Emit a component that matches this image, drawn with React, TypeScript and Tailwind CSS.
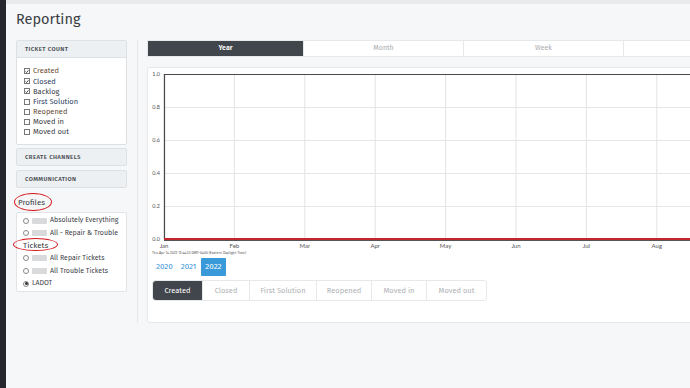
const tickets = [
  { label: "Created", checked: true, color: "text-[#6f4d33]" },
  { label: "Closed", checked: true, color: "text-[#30425f]" },
  { label: "Backlog", checked: true, color: "text-[#3b4047]" },
  { label: "First Solution", checked: false, color: "text-[#2a4163]" },
  { label: "Reopened", checked: false, color: "text-[#634a36]" },
  { label: "Moved in", checked: false, color: "text-[#3b4047]" },
  { label: "Moved out", checked: false, color: "text-[#3b4047]" },
];

const months = ["Jan", "Feb", "Mar", "Apr", "May", "Jun", "Jul", "Aug"];
const yLabels = ["1.0", "0.8", "0.6", "0.4", "0.2", "0.0"];
const periods = [
  { label: "Year", w: "w-[155px]" },
  { label: "Month", w: "w-[160px]" },
  { label: "Week", w: "w-[160px]" },
  { label: "", w: "w-[160px]" },
];
const series = [
  { label: "Created", w: "w-[49px]" },
  { label: "Closed", w: "w-[47px]" },
  { label: "First Solution", w: "w-[67px]" },
  { label: "Reopened", w: "w-[55px]" },
  { label: "Moved in", w: "w-[55px]" },
  { label: "Moved out", w: "w-[60px]" },
];

function Checkbox({ checked }: { checked: boolean }) {
  return (
    <span className="flex h-[6px] w-[6px] shrink-0 items-center justify-center border border-[#777] bg-white">
      {checked && (
        <svg viewBox="0 0 6 6" className="h-[5px] w-[5px]">
          <path d="M0.8 3 L2.4 4.6 L5.2 1.2" fill="none" stroke="#222" strokeWidth="1.2" />
        </svg>
      )}
    </span>
  );
}

function Radio({ checked = false }: { checked?: boolean }) {
  return (
    <span className="flex h-[6px] w-[6px] shrink-0 items-center justify-center rounded-full border border-[#888] bg-white">
      {checked && <span className="h-[3px] w-[3px] rounded-full bg-[#333]" />}
    </span>
  );
}

function Blur({ w }: { w: string }) {
  return <span className={`h-[6px] ${w} shrink-0 rounded-[1px] bg-[#d9dadc] blur-[0.6px]`} />;
}

function Chart() {
  const x0 = 16;
  const step = 70.4;
  const top = 6;
  const bottom = 171;
  const rows = 5;
  return (
    <svg width="560" height="182" className="block" style={{ fontFamily: "Lato, sans-serif" }}>
      {months.map((m, i) => (
        <line key={m} x1={x0 + i * step} y1={top} x2={x0 + i * step} y2={bottom} stroke="#e3e3e3" strokeWidth="1" />
      ))}
      {yLabels.map((l, i) => {
        const y = top + (i * (bottom - top)) / rows;
        return (
          <g key={l}>
            <line x1={x0} y1={y + 0.5} x2={560} y2={y + 0.5} stroke="#e6e6e6" strokeWidth="1" />
            <text x={12} y={y + 2} textAnchor="end" fontSize="5.5" fill="#555">
              {l}
            </text>
          </g>
        );
      })}
      <line x1={x0} y1={top + 0.5} x2={560} y2={top + 0.5} stroke="#4a4a4a" strokeWidth="1.2" />
      <line x1={x0 + 0.5} y1={top} x2={x0 + 0.5} y2={bottom} stroke="#4a4a4a" strokeWidth="1.2" />
      <line x1={x0} y1={bottom + 1.5} x2={560} y2={bottom + 1.5} stroke="#555" strokeWidth="1" />
      <line x1={x0} y1={bottom} x2={560} y2={bottom} stroke="#c4262e" strokeWidth="2" />
      {months.map((m, i) => (
        <text key={m} x={x0 + i * step} y={180} textAnchor="middle" fontSize="6" fill="#555">
          {m}
        </text>
      ))}
    </svg>
  );
}

export default function App() {
  return (
    <div
      className="flex h-[388px] w-[690px] overflow-hidden bg-[#f6f7f8] text-[#3d4147]"
      style={{ fontFamily: "'Fira Sans', Lato, 'Liberation Sans', sans-serif" }}
    >
      <div className="w-[6px] shrink-0 bg-[#25272c]" />
      <div className="flex min-w-0 flex-1 flex-col overflow-hidden">
        <div className="h-[4px] shrink-0 bg-[#e9eaeb]" />
        <h1 className="pl-[10px] pt-[6px] text-[14.5px] leading-[18px] text-[#3a3e44]">Reporting</h1>

        <div className="mt-[12px] flex pl-[10px]">
          {/* sidebar */}
          <div className="relative w-[111px] shrink-0">
            <div className="rounded-[2px] border border-[#dde1e4] bg-white">
              <div className="flex h-[17px] items-center border-b border-[#dde1e4] bg-[#edf0f2] pl-[8px] text-[6px] font-semibold tracking-[0.4px] text-[#4a4f55]">
                TICKET COUNT
              </div>
              <div className="flex flex-col px-[7px] pb-[7px] pt-[8px]">
                {tickets.map((t) => (
                  <label key={t.label} className="flex h-[10.2px] items-center gap-[3px]">
                    <Checkbox checked={t.checked} />
                    <span className={`text-[7.5px] leading-none ${t.color}`}>{t.label}</span>
                  </label>
                ))}
              </div>
            </div>

            <div className="mt-[3px] flex h-[18px] items-center rounded-[2px] border border-[#dde1e4] bg-[#edf0f2] pl-[8px] text-[6px] font-semibold tracking-[0.4px] text-[#4a4f55]">
              CREATE CHANNELS
            </div>
            <div className="mt-[4px] flex h-[18px] items-center rounded-[2px] border border-[#dde1e4] bg-[#edf0f2] pl-[8px] text-[6px] font-semibold tracking-[0.4px] text-[#4a4f55]">
              COMMUNICATION
            </div>

            <div className="mt-[8px] pl-[2px] text-[8px] leading-[14px] text-[#3a3e44]">Profiles</div>
            <div className="mt-[2px] rounded-[2px] border border-[#e2e4e6] bg-white px-[6px] pb-[1px] pt-[1px] text-[7px] text-[#3d4147]">
              <div className="flex h-[12.6px] items-center gap-[3px]">
                <Radio />
                <Blur w="w-[15px]" />
                <span>Absolutely Everything</span>
              </div>
              <div className="flex h-[12.6px] items-center gap-[3px]">
                <Radio />
                <Blur w="w-[15px]" />
                <span>All - Repair &amp; Trouble</span>
              </div>
              <div className="flex h-[12.6px] items-center text-[8px] text-[#3a3e44]">Tickets</div>
              <div className="flex h-[12.6px] items-center gap-[3px]">
                <Radio />
                <Blur w="w-[15px]" />
                <span>All Repair Tickets</span>
              </div>
              <div className="flex h-[12.6px] items-center gap-[3px]">
                <Radio />
                <Blur w="w-[15px]" />
                <span>All Trouble Tickets</span>
              </div>
              <div className="flex h-[12.6px] items-center gap-[3px]">
                <Radio checked />
                <span>LADOT</span>
              </div>
            </div>

            {/* annotation ellipses */}
            <span className="absolute left-[-2px] top-[153px] h-[18px] w-[38px] rounded-[50%] border-[1.5px] border-[#d4171c]" />
            <span className="absolute left-[-3px] top-[198px] h-[13px] w-[45px] rounded-[50%] border-[1.5px] border-[#d4171c]" />
          </div>

          {/* divider */}
          <div className="ml-[10px] h-[283px] w-px shrink-0 bg-[#e4e6e8]" />

          {/* main */}
          <div className="ml-[9px] w-[650px] shrink-0">
            <div className="flex h-[17px] border border-[#e6e8ea] bg-white">
              {periods.map((p, i) => (
                <div
                  key={i}
                  className={`flex ${p.w} shrink-0 items-center justify-center text-[7px] ${
                    i === 0
                      ? "bg-[#41464c] font-semibold text-white"
                      : "border-l border-[#e6e8ea] text-[#a9acaf]"
                  }`}
                >
                  {p.label}
                </div>
              ))}
            </div>

            <div className="mt-[10px] h-[256px] rounded-[2px] border border-[#e6e8ea] bg-white">
              <Chart />
              <div className="pl-[4px] text-[3.6px] leading-[6px] text-[#555]">
                Thu Apr 14 2022 12:44:53 GMT-0400 (Eastern Daylight Time)
              </div>
              <div className="mt-[2px] flex items-center pl-[5px] text-[8px] text-[#2e8fd6]">
                <span className="px-[3px] py-[3px]">2020</span>
                <span className="ml-[2px] px-[3px] py-[3px]">2021</span>
                <span className="ml-[2px] rounded-[1px] bg-[#3a9ad9] px-[4px] py-[3px] text-white">2022</span>
              </div>
              <div className="ml-[4px] mt-[4px] flex h-[21px] w-fit rounded-[3px] border border-[#e6e8ea] text-[7.5px] text-[#aeb1b4]">
                {series.map((s, i) => (
                  <div
                    key={s.label}
                    className={`flex ${s.w} items-center justify-center ${
                      i === 0
                        ? "rounded-l-[3px] bg-[#41464c] text-white"
                        : "border-l border-[#e6e8ea]"
                    }`}
                  >
                    {s.label}
                  </div>
                ))}
              </div>
            </div>
          </div>
        </div>
      </div>
    </div>
  );
}
